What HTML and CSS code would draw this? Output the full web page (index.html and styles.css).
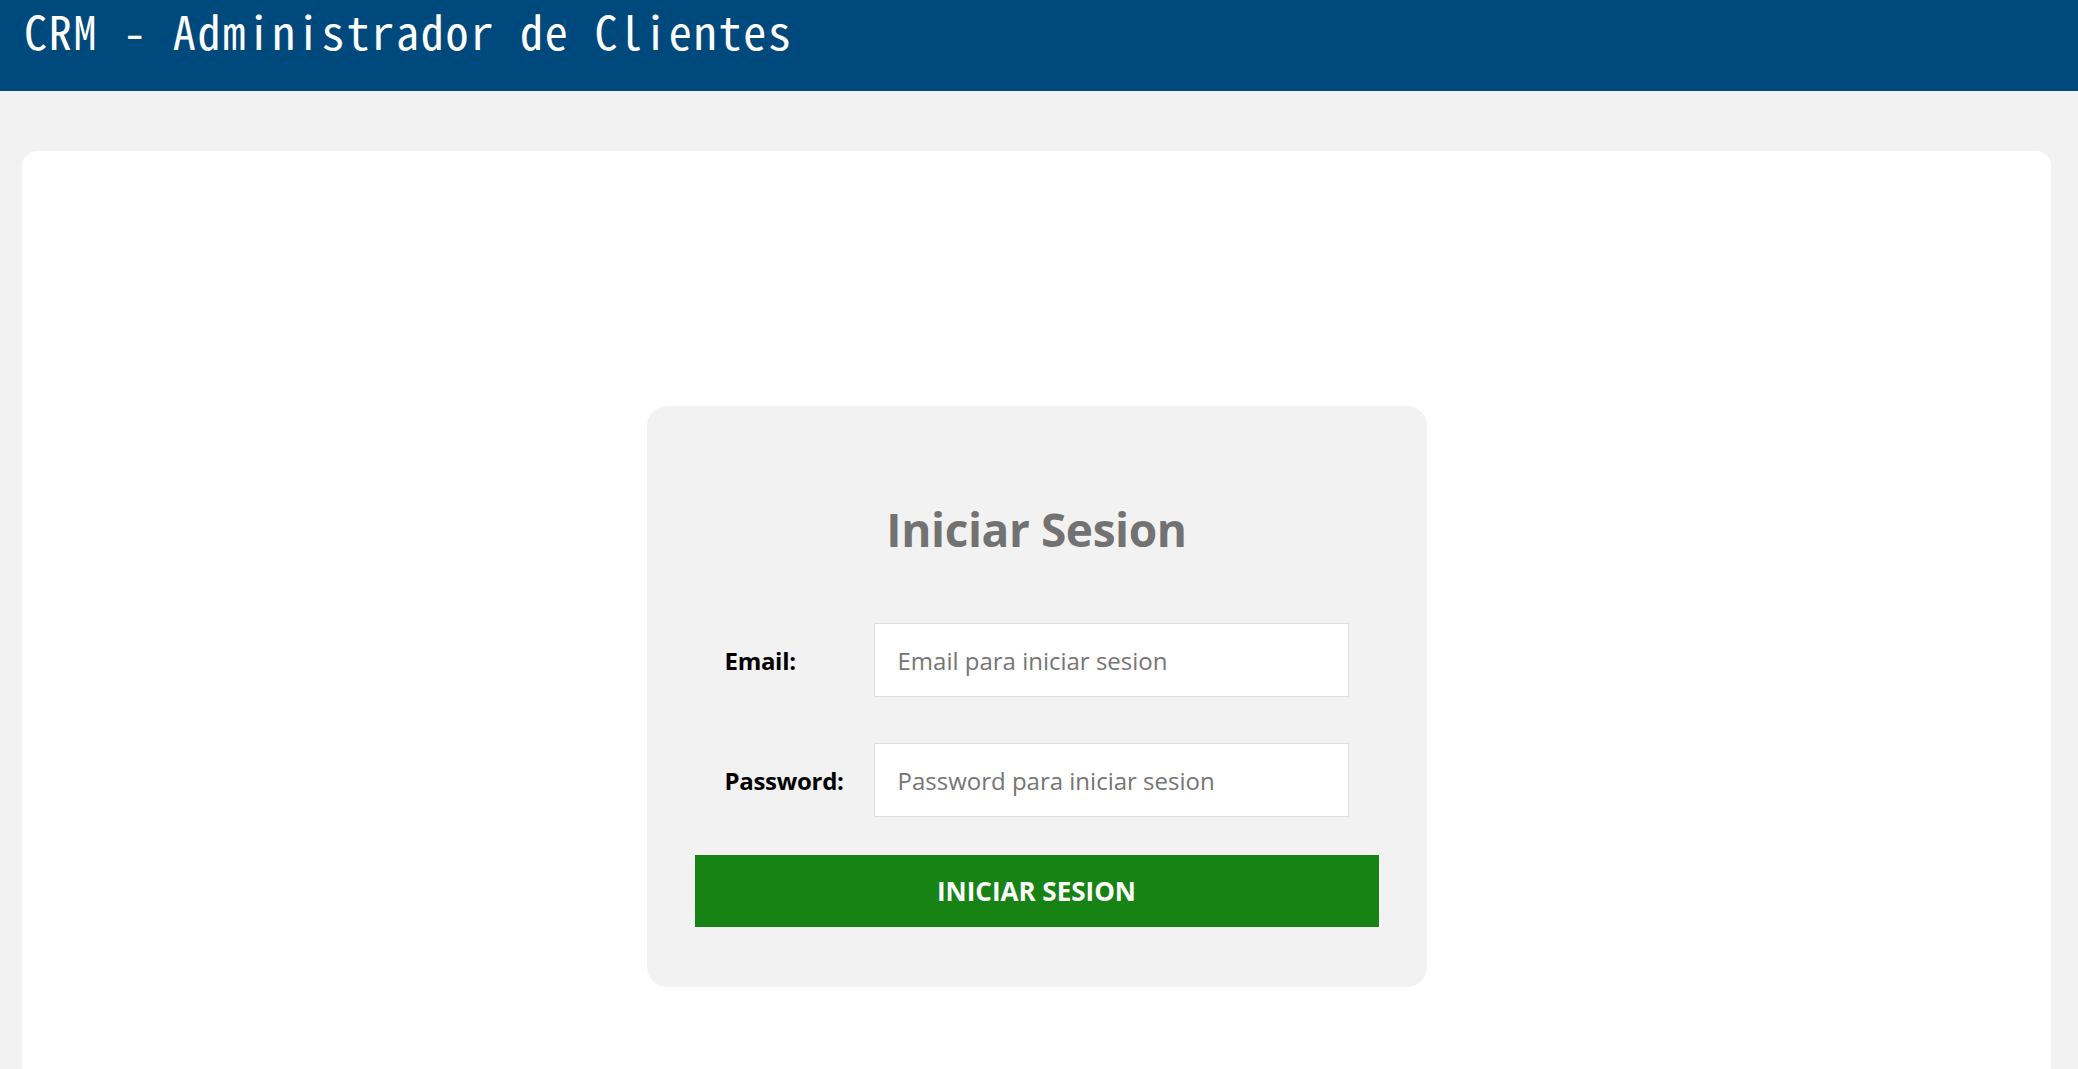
FILE: index.html
```html
<!DOCTYPE html>
<html lang="es">
<head>
<meta charset="utf-8">
<title>CRM - Administrador de Clientes</title>
<link rel="stylesheet" href="styles.css">
</head>
<body>
<header class="topbar">
  <h1 class="topbar-title">CRM - Administrador de Clientes</h1>
</header>
<main class="page">
  <section class="card">
    <form class="login">
      <h2 class="login-title">Iniciar Sesion</h2>
      <div class="field">
        <label class="field-label" for="email">Email:</label>
        <input class="field-input" id="email" type="email" placeholder="Email para iniciar sesion">
      </div>
      <div class="field">
        <label class="field-label" for="password">Password:</label>
        <input class="field-input" id="password" type="password" placeholder="Password para iniciar sesion">
      </div>
      <button class="login-btn" type="button">Iniciar Sesion</button>
    </form>
  </section>
</main>
</body>
</html>
```

FILE: styles.css
```css
* { box-sizing: border-box; }

body {
  margin: 0;
  background: #f2f2f2;
  font-family: "Open Sans", "Noto Sans", sans-serif;
}

.topbar {
  height: 91px;
  background: #00497c;
  padding: 0 0 0 24px;
}

.topbar-title {
  margin: 0;
  color: #ffffff;
  font-family: "Noto Sans Mono CJK JP", "Liberation Mono", monospace;
  font-weight: 500;
  font-size: 46px;
  letter-spacing: 1.8px;
  line-height: 60px;
  white-space: nowrap;
}

.page {
  padding: 60px 27px 0 22px;
}

.card {
  background: #ffffff;
  border-radius: 15px;
  padding: 255px 0 200px;
  display: flex;
  justify-content: center;
}

.login {
  width: 780px;
  background: #f2f2f2;
  border-radius: 20px;
  padding: 92px 48px 60px;
  display: flex;
  flex-direction: column;
}

.login-title {
  margin: 0 0 63px;
  text-align: center;
  color: #727272;
  font-size: 46px;
  font-weight: 700;
  letter-spacing: -0.4px;
  line-height: normal;
}

.field {
  display: flex;
  align-items: center;
  padding: 0 30px;
  margin-bottom: 46px;
}

.field + .field {
  margin-bottom: 38px;
}

.field-label {
  width: 149px;
  flex: none;
  color: #000000;
  font-size: 24px;
  font-weight: 700;
  letter-spacing: -0.3px;
}

.field-input {
  flex: 1;
  min-width: 0;
  height: 74px;
  border: 1px solid #dedede;
  background: #ffffff;
  padding: 0 23px;
  font-family: "Open Sans", "Noto Sans", sans-serif;
  font-size: 24px;
  color: #333333;
  outline: none;
}

.field-input::placeholder {
  color: #757575;
}

.login-btn {
  height: 72px;
  width: 100%;
  border: none;
  background: #178315;
  color: #ffffff;
  font-family: "Open Sans", "Noto Sans", sans-serif;
  font-size: 26px;
  font-weight: 700;
  letter-spacing: 0;
  text-transform: uppercase;
  cursor: pointer;
}
```
